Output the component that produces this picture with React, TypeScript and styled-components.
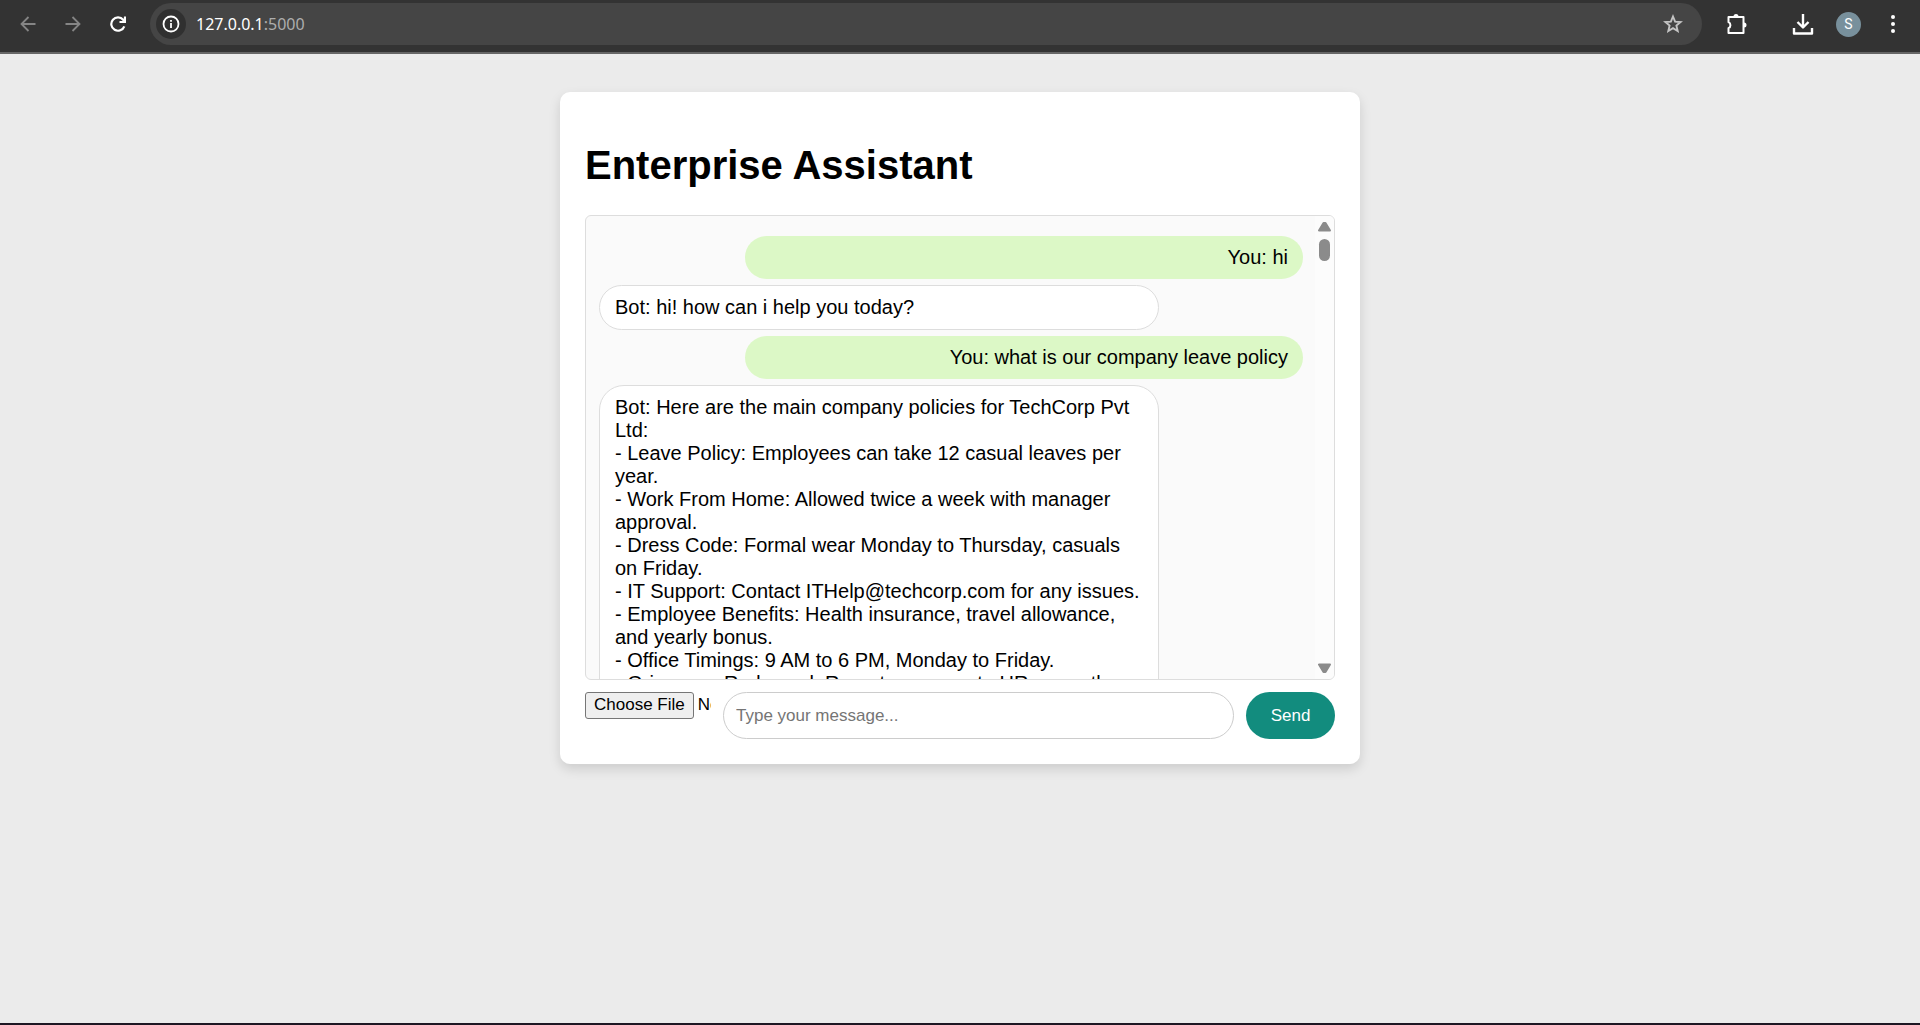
import React from "react";
import styled, { createGlobalStyle } from "styled-components";

const GlobalStyle = createGlobalStyle`
  * { box-sizing: border-box; }
  body {
    margin: 0;
    background: #ebebeb;
    color: #000;
    font-family: "Liberation Sans", Arial, sans-serif;
    font-size: 20px;
    line-height: 23px;
  }
`;

const Page = styled.div`
  min-height: 100vh;
  display: flex;
  flex-direction: column;
  border-bottom: 2px solid #1d1723;
`;

const Toolbar = styled.header`
  display: flex;
  align-items: center;
  height: 54px;
  padding: 0 15px 4px 16px;
  background: #333;
  border-bottom: 2px solid #666;
`;

const IconButton = styled.button<{ $tone?: string; $space?: number }>`
  display: flex;
  flex: none;
  width: 24px;
  height: 24px;
  padding: 0;
  margin-right: ${(p) => p.$space ?? 0}px;
  align-items: center;
  justify-content: center;
  border: 0;
  background: none;
  color: ${(p) => p.$tone ?? "#fff"};
`;

const AddressBar = styled.div`
  display: flex;
  flex: 1;
  align-items: center;
  height: 42px;
  margin: 0 23px 0 0;
  padding: 0 17px 0 6px;
  border-radius: 21px;
  background: #454545;
`;

const SiteInfo = styled.button`
  display: flex;
  width: 30px;
  height: 30px;
  padding: 0;
  align-items: center;
  justify-content: center;
  border: 0;
  border-radius: 50%;
  background: #303030;
  color: #fff;
`;

const Address = styled.span`
  flex: 1;
  margin-left: 10px;
  color: #fff;
  font: 16px/24px "Noto Sans", "Open Sans", sans-serif;
`;

const Port = styled.span`
  color: #adadad;
`;

const Avatar = styled.button`
  width: 25px;
  height: 25px;
  padding: 0;
  margin-right: 20px;
  border: 0;
  border-radius: 50%;
  background: #78909c;
  color: #fff;
  font: 14px/25px Roboto, sans-serif;
`;

const Card = styled.main`
  width: 800px;
  max-width: 100%;
  margin: 38px auto;
  padding: 25px;
  border-radius: 10px;
  background: #fff;
  box-shadow: 0 5px 12px rgba(0, 0, 0, 0.13);
`;

const Title = styled.h1`
  margin: 25px 0 27px;
  font-size: 40px;
  line-height: 46px;
`;

const ChatBox = styled.section`
  display: flex;
  height: 465px;
  border: 1px solid #ddd;
  border-radius: 6px;
  background: #fafafa;
  overflow: hidden;
`;

const Messages = styled.div`
  display: flex;
  flex: 1;
  flex-direction: column;
  gap: 6px;
  padding: 20px 12px 0 13px;
  overflow: hidden;
`;

const Bubble = styled.p<{ $mine?: boolean }>`
  box-sizing: content-box;
  flex: none;
  width: 75%;
  margin: 0;
  padding: 10px 15px;
  align-self: ${(p) => (p.$mine ? "flex-end" : "flex-start")};
  border: ${(p) => (p.$mine ? "0" : "1px solid #ddd")};
  border-radius: 25px;
  background: ${(p) => (p.$mine ? "#dcf8c6" : "#fff")};
  text-align: ${(p) => (p.$mine ? "right" : "left")};
  white-space: pre-line;
`;

const ScrollTrack = styled.div`
  display: flex;
  flex-direction: column;
  align-items: center;
  width: 19px;
  padding: 5px 0;
  background: #fcfcfc;
`;

const Thumb = styled.div`
  width: 11px;
  height: 22px;
  margin: 7px 0 auto;
  border-radius: 6px;
  background: #8b8b8b;
`;

const Composer = styled.form`
  display: flex;
  gap: 12px;
  margin-top: 12px;
`;

const FileInput = styled.input`
  flex: none;
  width: 126px;
  font: 17px/20px "Liberation Sans", Arial, sans-serif;
  color: #000;

  &::file-selector-button {
    height: 27px;
    margin: 0 4px 0 0;
    padding: 0 8px 2px;
    border: 1px solid #767676;
    border-radius: 3px;
    background: #efefef;
    color: #000;
    font: 17px/20px "Liberation Sans", Arial, sans-serif;
  }
`;

const TextInput = styled.input`
  flex: 1;
  min-width: 0;
  height: 47px;
  padding: 0 12px;
  border: 1px solid #ccc;
  border-radius: 25px;
  background: #fff;
  font: 17px/20px "Liberation Sans", Arial, sans-serif;

  &::placeholder { color: #757575; }
`;

const SendButton = styled.button`
  width: 89px;
  padding: 0;
  border: 0;
  border-radius: 25px;
  background: #128c7e;
  color: #fff;
  font: 17px/20px "Liberation Sans", Arial, sans-serif;
`;

const Arrow = ({ down }: { down?: boolean }) => (
  <svg width="13" height="11" viewBox="0 0 13 11" aria-hidden="true">
    <path
      d={down ? "M1 1.5h11L7.5 9h-2z" : "M1 9.500h11L7.500 2h-2z"}
      fill="#8b8b8b"
      stroke="#8b8b8b"
      strokeWidth="2"
      strokeLinejoin="round"
    />
  </svg>
);

const messages = [
  { mine: true, text: "You: hi" },
  { mine: false, text: "Bot: hi! how can i help you today?" },
  { mine: true, text: "You: what is our company leave policy" },
  {
    mine: false,
    text: `Bot: Here are the main company policies for TechCorp Pvt Ltd:
- Leave Policy: Employees can take 12 casual leaves per year.
- Work From Home: Allowed twice a week with manager approval.
- Dress Code: Formal wear Monday to Thursday, casuals on Friday.
- IT Support: Contact ITHelp@techcorp.com for any issues.
- Employee Benefits: Health insurance, travel allowance, and yearly bonus.
- Office Timings: 9 AM to 6 PM, Monday to Friday.
- Grievance Redressal: Report concerns to HR promptly.`,
  },
];

export default function App() {
  return (
    <Page>
      <GlobalStyle />
      <Toolbar>
        <IconButton aria-label="Back" $tone="#858585" $space={21}>
          <svg width="16" height="16" viewBox="0 0 16 16" fill="none" stroke="currentColor" strokeWidth="1.8">
            <path d="M15.5 8H2M8.5 1L1.5 8l7 7" />
          </svg>
        </IconButton>
        <IconButton aria-label="Forward" $tone="#858585" $space={21}>
          <svg width="16" height="16" viewBox="0 0 16 16" fill="none" stroke="currentColor" strokeWidth="1.8">
            <path d="M.5 8H14M7.5 1l7 7-7 7" />
          </svg>
        </IconButton>
        <IconButton aria-label="Reload" $space={20}>
          <svg width="16" height="16" viewBox="0 0 16 16" fill="none" stroke="currentColor" strokeWidth="2.2">
            <path d="M14.3 10.3A6.7 6.7 0 1 1 13.2 3.8L14.5 5.5M15 .5V6H9.5" />
          </svg>
        </IconButton>
        <AddressBar>
          <SiteInfo aria-label="View site information">
            <svg width="18" height="18" viewBox="0 0 18 18" fill="none" stroke="currentColor" strokeWidth="1.8">
              <circle cx="9" cy="9" r="7.5" />
              <path d="M9 8v5M9 5v1.8" />
            </svg>
          </SiteInfo>
          <Address>
            127.0.0.1<Port>:5000</Port>
          </Address>
          <IconButton aria-label="Bookmark this tab" $tone="#c4c4c4">
            <svg width="20" height="20" viewBox="0 0 20 20" fill="none" stroke="currentColor" strokeWidth="1.9">
              <path d="M10 2.500l2.100 5.100 5.500.4-4.200 3.600 1.300 5.400-4.700-2.900L5.300 17l1.300-5.400L2.400 8l5.500-.4z" />
            </svg>
          </IconButton>
        </AddressBar>
        <IconButton aria-label="Extensions" $space={42}>
          <svg width="22" height="22" viewBox="0 0 22 22">
            <path
              d="M2.500 4H17.500v16H2.500v-4.800a3.300 3.300 0 0 0 0-6z"
              fill="none"
              stroke="currentColor"
              strokeWidth="2"
              strokeLinejoin="round"
            />
            <path d="M7.500 3.500a2.500 2.500 0 0 1 5 0zM18 9.500a2.500 2.500 0 0 1 0 5z" fill="currentColor" />
          </svg>
        </IconButton>
        <IconButton aria-label="Downloads" $space={21}>
          <svg width="22" height="22" viewBox="0 0 22 22" fill="none" stroke="currentColor" strokeWidth="2.4">
            <path d="M11 1v13M5.500 9l5.500 5.500L16.500 9M2 15v5.500h18V15" strokeLinejoin="round" />
          </svg>
        </IconButton>
        <Avatar aria-label="Profile">S</Avatar>
        <IconButton aria-label="Browser menu">
          <svg width="20" height="20" viewBox="0 0 20 20" fill="currentColor">
            <circle cx="10" cy="3" r="2" />
            <circle cx="10" cy="10" r="2" />
            <circle cx="10" cy="17" r="2" />
          </svg>
        </IconButton>
      </Toolbar>
      <Card>
        <Title>Enterprise Assistant</Title>
        <ChatBox aria-label="Conversation">
          <Messages>
            {messages.map((m) => (
              <Bubble key={m.text} $mine={m.mine}>
                {m.text}
              </Bubble>
            ))}
          </Messages>
          <ScrollTrack>
            <Arrow />
            <Thumb />
            <Arrow down />
          </ScrollTrack>
        </ChatBox>
        <Composer onSubmit={(e) => e.preventDefault()}>
          <FileInput type="file" aria-label="Attach a file" />
          <TextInput type="text" placeholder="Type your message..." aria-label="Message" />
          <SendButton type="submit">Send</SendButton>
        </Composer>
      </Card>
    </Page>
  );
}
